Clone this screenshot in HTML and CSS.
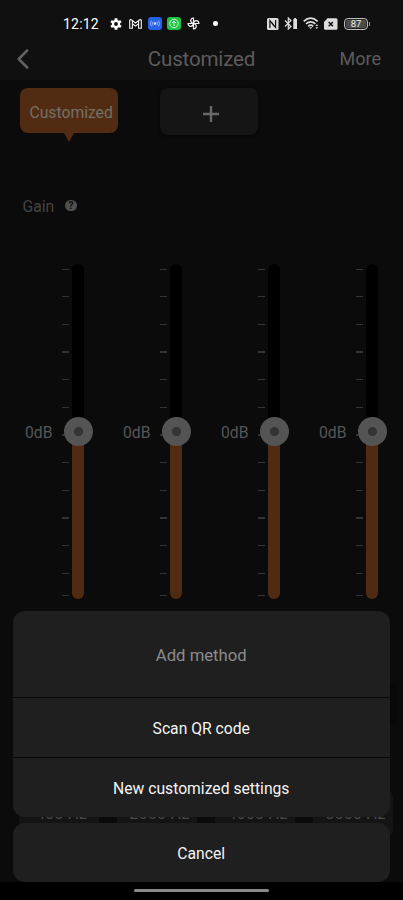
FILE: index.html
```html
<!DOCTYPE html>
<html lang="en">
<head>
<meta charset="utf-8">
<meta name="viewport" content="width=device-width">
<title>Customized</title>
<link rel="stylesheet" href="styles.css">
</head>
<body>
<div class="screen">
  <header class="top">
    <div class="status">
      <span class="clock">12:12</span>
      <svg class="gear" width="12" height="12" viewBox="0 0 12 12"><g stroke="#fff" stroke-width="2.8"><path d="M6 .3v11.4M1.05 3.15l9.9 5.7M1.05 8.85l9.9-5.7"/></g><circle cx="6" cy="6" r="4.2" fill="#fff"/><circle cx="6" cy="6" r="1.9" fill="#101010"/></svg>
      <svg class="mail" width="13" height="10" viewBox="0 0 13 10"><path d="M.7 9.3V1.4Q1.4.1 2.7 1l3.8 3L10.3 1q1.3-.9 2 .4v7.900H9.600V4.700L6.500 7.100 3.400 4.700v4.600zM3.400 4.500V1.700M9.600 4.500V1.700" fill="none" stroke="#f4f4f4" stroke-width="1.100"/></svg>
      <svg class="cast" width="14" height="13" viewBox="0 0 14 13"><rect width="14" height="13" rx="3" fill="#2861e8"/><circle cx="7" cy="6.500" r="1.200" fill="#dce7ff"/><path d="M5.100 4.700q-1.400 1.800 0 3.600M3.500 3.700q-2.200 2.800 0 5.600M8.900 4.700q1.400 1.800 0 3.600M10.500 3.700q2.200 2.800 0 5.600" fill="none" stroke="#b9cdff" stroke-width=".8"/></svg>
      <svg class="up" width="14" height="13" viewBox="0 0 14 13"><rect width="14" height="13" rx="3" fill="#22c044"/><circle cx="7" cy="6.500" r="4.200" fill="none" stroke="#d9ffe1" stroke-width=".9"/><path d="M7 9V4.300M5.100 6L7 4.100 8.900 6" fill="none" stroke="#d9ffe1" stroke-width="1"/></svg>
      <svg class="fan" width="13" height="13" viewBox="0 0 13 13"><g fill="none" stroke="#f4f4f4" stroke-width="1.200"><path id="blade" d="M6.500 6.500V1.100Q3.700 1.300 3.700 3.800q0 2 2.800 2.700"/><use href="#blade" transform="rotate(90 6.500 6.500)"/><use href="#blade" transform="rotate(180 6.500 6.500)"/><use href="#blade" transform="rotate(270 6.500 6.500)"/></g></svg>
      <i class="dot"></i>
      <svg class="nfc" width="12" height="12" viewBox="0 0 12 12"><rect width="11.500" height="12" rx="1.500" fill="#ddd"/><path d="M2.900 10V2.500L7.300 8.500M8.600 2v7.500L4.500 4" fill="none" stroke="#101010" stroke-width="1.200"/></svg>
      <svg class="bt" width="14" height="13" viewBox="0 0 14 13"><path d="M1 3.500l6 6L4.300 12V1L7 3.500 1 9.500" fill="none" stroke="#ddd" stroke-width="1.200"/><path d="M9.300 2h1V1h1.700v1h1v10H9.300z" fill="#ddd"/></svg>
      <svg class="wifi" width="17" height="13" viewBox="0 0 17 13"><g fill="none" stroke="#ddd" stroke-width="1.700"><path d="M.7 4.300q7-6.200 14 0M3 6.900q4.700-4.200 9.400 0M5.200 9.300q2.500-2.200 5 0"/></g><path d="M6 10.200h3.400L7.700 12zM12.300 9l1.500-1.700L15.300 9zM12.300 10.200h3l-1.500 1.700z" fill="#ddd"/></svg>
      <svg class="sim" width="14" height="12" viewBox="0 0 14 12"><path d="M3.500.3H12q1.500 0 1.500 1.500v8.400q0 1.500-1.500 1.500H1.500Q0 11.700 0 10.200V4z" fill="#ddd"/><path d="M4.700 4l4.200 4.200M8.900 4L4.700 8.200" stroke="#101010" stroke-width="1.500"/></svg>
      <span class="battery">87</span>
    </div>
    <nav class="bar">
      <svg class="back" width="12" height="20" viewBox="0 0 12 20"><path d="M10.200 1.500L1.700 10l8.500 8.500" fill="none" stroke="#626262" stroke-width="2.500" stroke-linecap="round" stroke-linejoin="round"/></svg>
      <h1 class="title">Customized</h1>
      <span class="more">More</span>
    </nav>
  </header>
  <main class="content">
    <div class="presets">
      <div class="preset active">Customized</div>
      <div class="preset add"><svg width="16" height="16" viewBox="0 0 16 16"><path d="M8 0v16M0 8h16" stroke="#696969" stroke-width="2.400"/></svg></div>
    </div>
    <div class="gain"><span>Gain</span><b class="help">?</b></div>
    <div class="sliders">
      <div class="slider"><span class="value">0dB</span><div class="ticks"><i></i><i></i><i></i><i></i><i></i><i></i><i></i><i></i><i></i><i></i><i></i><i></i><i></i></div><div class="track"><b class="knob"></b></div></div>
      <div class="slider"><span class="value">0dB</span><div class="ticks"><i></i><i></i><i></i><i></i><i></i><i></i><i></i><i></i><i></i><i></i><i></i><i></i><i></i></div><div class="track"><b class="knob"></b></div></div>
      <div class="slider"><span class="value">0dB</span><div class="ticks"><i></i><i></i><i></i><i></i><i></i><i></i><i></i><i></i><i></i><i></i><i></i><i></i><i></i></div><div class="track"><b class="knob"></b></div></div>
      <div class="slider"><span class="value">0dB</span><div class="ticks"><i></i><i></i><i></i><i></i><i></i><i></i><i></i><i></i><i></i><i></i><i></i><i></i><i></i></div><div class="track"><b class="knob"></b></div></div>
    </div>
    <div class="panel"></div>
    <div class="bands"><span>400 Hz</span><span>2000 Hz</span><span>4000 Hz</span><span>8000 Hz</span></div>
  </main>
  <footer class="home"><i></i></footer>
  <section class="sheet">
    <div class="group">
      <div class="heading">Add method</div>
      <div class="option">Scan QR code</div>
      <div class="option">New customized settings</div>
    </div>
    <div class="group cancel">Cancel</div>
  </section>
</div>
</body>
</html>
```

FILE: styles.css
```css
* { box-sizing: border-box; }
body { margin: 0; background: #0b0b0b; font-family: Roboto, "Liberation Sans", sans-serif; }
.screen { position: relative; width: 403px; height: 900px; overflow: hidden; display: flex; flex-direction: column; }
.top { height: 80px; background: #101010; flex: none; }
.status { height: 47px; padding: 0 33px 0 63px; display: flex; align-items: center; }
.status svg { flex: none; }
.clock { width: 47px; font-size: 14px; font-weight: 400; letter-spacing: .2px; color: #fff; }
.gear { margin-right: 7px; }
.mail { margin-right: 6px; }
.cast { margin-right: 5px; }
.up { margin-right: 6px; }
.dot { width: 4.500px; height: 4.500px; border-radius: 50%; background: #fff; margin: 0 49.500px 0 13px; flex: none; }
.nfc { margin-right: 5px; }
.bt { margin-right: 5px; }
.wifi { margin-right: 4px; }
.sim { margin-right: 6px; }
.battery { position: relative; width: 24px; height: 12px; border: 1px solid #bbb; border-radius: 4px; background: #4b4b4b; background-clip: padding-box; box-shadow: inset 0 0 0 1px #222; color: #eee; font-size: 9.500px; font-weight: 400; line-height: 10.500px; text-align: center; flex: none; }
.battery::after { content: ""; position: absolute; right: -3px; top: 3px; width: 1.500px; height: 4px; background: #999; }
.bar { height: 24px; display: grid; grid-template-columns: 100px 1fr 100px; align-items: center; }
.back { margin-left: 16.500px; }
.title { margin: 0; text-align: center; color: #5c5c5c; font-size: 20.600px; letter-spacing: -.2px; font-weight: 400; line-height: 24px; }
.more { justify-self: end; margin-right: 22px; color: #5c5c5c; font-size: 18px; line-height: 24px; }
.content { height: 802px; padding-top: 8px; flex: none; }
.presets { display: flex; gap: 42px; padding-left: 20px; height: 106px; }
.preset { width: 98px; height: 45px; border-radius: 8px; }
.active { position: relative; background: #522c12; color: #747068; font-size: 15.700px; line-height: 49px; padding-left: 9.500px; }
.active::after { content: ""; position: absolute; left: 43.500px; top: 45px; border: 5.500px solid transparent; border-top: 9px solid #522c12; border-bottom: 0; }
.add { height: 47px; background: #151515; display: flex; align-items: center; justify-content: center; padding: 4px 0 0 4px; box-shadow: 0 1px 3px #060606; }
.gain { display: flex; align-items: center; gap: 11px; padding-left: 22.500px; height: 24px; color: #444; font-size: 15.700px; }
.help { width: 11.500px; height: 11.500px; margin-top: -1px; border-radius: 50%; background: #505050; color: #0b0b0b; font-size: 10px; line-height: 12px; text-align: center; }
.sliders { display: grid; grid-template-columns: repeat(4, 98px); margin-top: 46px; height: 335px; }
.slider { display: grid; grid-template-columns: 61.500px 11px 12px; align-items: start; }
.value { padding: 159px 0 0 25px; font-size: 15.700px; line-height: 20px; color: #565656; }
.ticks i { display: block; width: 7px; height: 1.300px; background: #333; margin-bottom: 26.350px; }
.ticks { padding-top: 4.500px; }
.ticks i:nth-child(12) { margin-bottom: 20.700px; }
.ticks i:last-child { margin: 0; }
.track { position: relative; width: 11.500px; height: 335px; border-radius: 6px; margin-left: -.3px; background: linear-gradient(#000 168px, #502b11 168px); }
.knob { position: absolute; left: -8.700px; top: 153px; width: 29px; height: 29px; border-radius: 50%; background: radial-gradient(circle, #343434 4.200px, #545454 5px); }
.panel { width: 378px; height: 42px; margin: 84px 0 0 20px; border-radius: 8px; background: #080808; }
.bands { display: grid; grid-template-columns: repeat(4, 80px); gap: 18px; margin: 66px 0 0 19px; }
.bands span { height: 45px; border-radius: 6px; background: #141414; color: #494949; font-size: 16.300px; line-height: 46px; text-align: center; padding-left: 5px; white-space: nowrap; }
.home { height: 18px; background: #000; flex: none; display: flex; justify-content: center; padding-top: 7px; }
.home i { width: 135px; height: 3px; border-radius: 2px; background: #8a8a8a; }
.sheet { position: absolute; left: 13px; top: 610.500px; width: 376.500px; display: flex; flex-direction: column; gap: 6px; color: #f4f4f4; font-size: 15.700px; text-align: center; }
.group { border-radius: 12px; background: #1f1f1f; overflow: hidden; }
.heading { height: 86.500px; line-height: 90px; color: #8c8c8c; font-size: 16.700px; }
.option { height: 60px; border-top: 1px solid #060606; line-height: 61px; }
.cancel { height: 59px; line-height: 61px; }
```
